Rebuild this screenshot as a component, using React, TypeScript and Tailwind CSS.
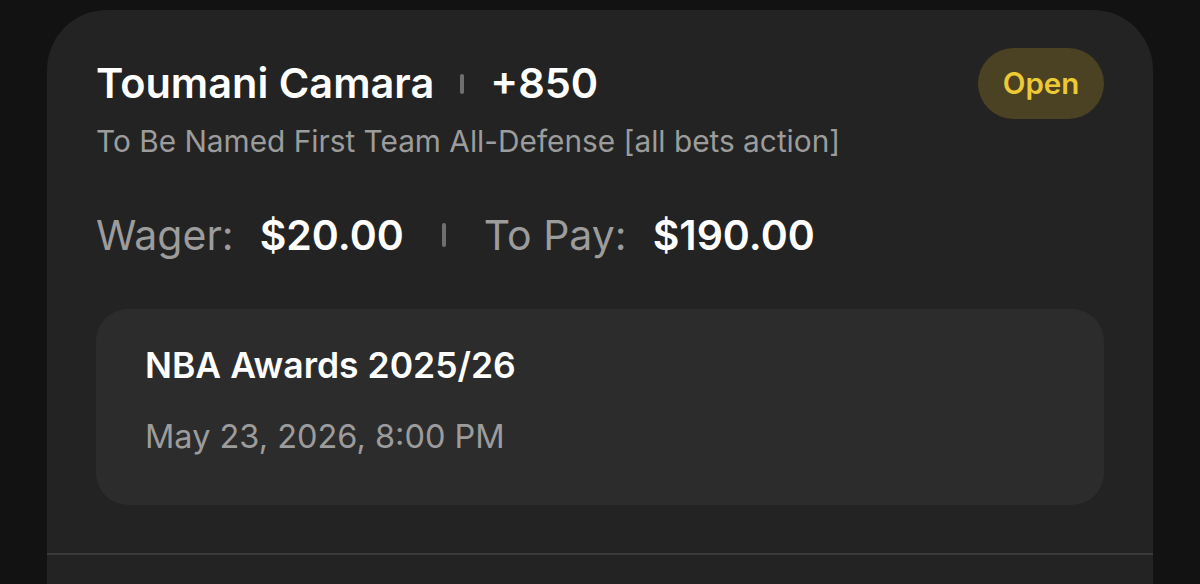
import React from 'react';

const Sep: React.FC<{ h?: string }> = ({ h = 'h-[20px]' }) => (
    <span className={`inline-block w-[4px] ${h} rounded-full bg-[#6f6f6f]`} />
);

const App: React.FC = () => {
    return (
        <div className="h-[584px] w-[1200px] overflow-hidden bg-[#121212] px-[47px] pt-[10px] font-['Inter',sans-serif]">
            <div className="h-[600px] rounded-t-[60px] bg-[#232323]">
                <div className="px-[49px] pt-[38px]">
                    <div className="flex items-center justify-between">
                        <div className="flex items-center gap-[26px] text-[41.5px] font-semibold text-white">
                            <span>Toumani Camara</span>
                            <Sep />
                            <span>+850</span>
                        </div>
                        <div className="flex h-[71px] w-[126px] items-center justify-center rounded-full bg-[#4a4223] text-[29.5px] font-semibold text-[#ecc935]">
                            Open
                        </div>
                    </div>
                    <p className="text-[29.8px] text-[#9c9c9c]">To Be Named First Team All-Defense [all bets action]</p>

                    <div className="mt-[41px] flex items-center text-[41px]">
                        <span className="text-[#9c9c9c]">Wager:</span>
                        <span className="ml-[26px] font-semibold text-white">$20.00</span>
                        <span className="mx-[38px] flex items-center"><Sep h="h-[24px]" /></span>
                        <span className="text-[#9c9c9c]">To Pay:</span>
                        <span className="ml-[26px] font-semibold text-white">$190.00</span>
                    </div>

                    <div className="mt-[43px] h-[196px] rounded-[32px] bg-[#2c2c2c] px-[49px] pt-[30px]">
                        <p className="text-[35.5px] font-semibold text-white">NBA Awards 2025/26</p>
                        <p className="mt-[21px] text-[32.5px] text-[#9c9c9c]">May 23, 2026, 8:00 PM</p>
                    </div>
                </div>
                <div className="mt-[48px] h-[2px] bg-[#3a3a3a]" />
            </div>
        </div>
    );
};

export default App;
